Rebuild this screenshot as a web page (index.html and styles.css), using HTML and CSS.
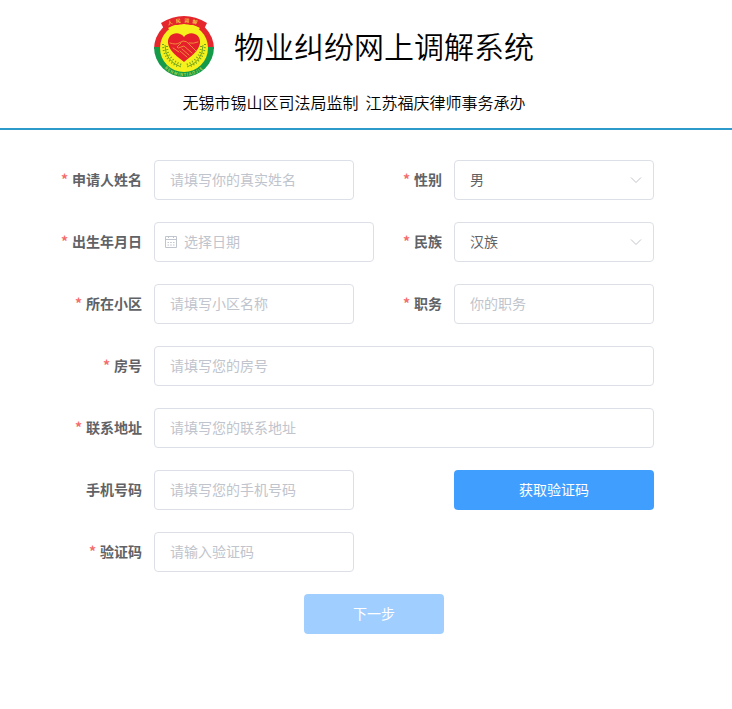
FILE: index.html
```html
<!DOCTYPE html>
<html lang="zh-CN">
<head>
    <meta charset="UTF-8">
    <meta name="viewport" content="width=device-width, initial-scale=1.0">
    <title>物业纠纷网上调解系统</title>
    <link rel="stylesheet" href="styles.css">
</head>
<body>
    <header class="header">
        <div class="brand">
            <svg class="logo" viewBox="0 0 60 62" aria-hidden="true">
                <defs>
                    <path id="arcTop" d="M9 12 Q30 1 51 12"/>
                    <path id="arcBottom" d="M3 35 A27 25 0 0 0 57 35"/>
                </defs>
                <path d="M0 33 A30 30 0 0 1 60 33 Z" fill="#e5262c"/>
                <path d="M0 31 A30 30 0 0 0 60 31 Z" fill="#159a4a"/>
                <circle cx="30" cy="32" r="24" fill="#f6f01c"/>
                <path d="M14 12 L20 9 H40 L46 12 L40 19 H20 Z" fill="#f6f01c"/>
                <path d="M7 7 Q30 -7 53 7 L50 13 Q30 3 10 13 Z" fill="#e5262c"/>
                <g fill="none" stroke="#6fa51e" stroke-width="1">
                    <path d="M11 29 Q11 45 27 51 M49 29 Q49 45 33 51"/>
                    <path stroke-width="2" stroke-dasharray="1 2" d="M9 28 Q9 44 25 51 M51 28 Q51 44 35 51"/>
                    <path stroke-width="2" stroke-dasharray="1 2" d="M13 30 Q13 43 28 49 M47 30 Q47 43 32 49"/>
                </g>
                <path d="M30 21 C25 14 13 17 14 27 C15 35 24 41 30 46 C36 41 45 35 46 27 C47 17 35 14 30 21 Z" fill="#e5202a"/>
                <g fill="none" stroke="#f08a3c" stroke-width="1" stroke-linecap="round">
                    <path d="M16 27 Q22 29 25 27 L29 25 Q33 25 35 28 L42 35"/>
                    <path d="M44 26 Q39 28 35 27 M27 27 L23 31 Q24 33 27 31 L30 30 L38 37"/>
                    <path d="M19 32 L25 36 M28 33 L35 39 M26 35 L33 41"/>
                </g>
                <text class="logo-top"><textPath href="#arcTop" startOffset="50%">人民调解</textPath></text>
                <text class="logo-bottom"><textPath href="#arcBottom" startOffset="50%">RENMINTIAOJIE</textPath></text>
            </svg>
            <h1 class="title">物业纠纷网上调解系统</h1>
        </div>
        <p class="subtitle">无锡市锡山区司法局监制&nbsp; 江苏福庆律师事务承办</p>
    </header>

    <main class="main">
        <form class="form">
            <div class="item">
                <label class="label required" for="name">申请人姓名</label>
                <input class="input" type="text" id="name" placeholder="请填写你的真实姓名">
            </div>
            <div class="item">
                <label class="label required" for="sex">性别</label>
                <div class="field">
                    <select class="input" id="sex">
                        <option>男</option>
                        <option>女</option>
                    </select>
                    <svg class="arrow" viewBox="0 0 14 14" aria-hidden="true"><path d="M2 4.500 L7 9.500 L12 4.500"/></svg>
                </div>
            </div>
            <div class="item">
                <label class="label required" for="birthday">出生年月日</label>
                <div class="field date">
                    <svg class="calendar" viewBox="0 0 14 14" aria-hidden="true">
                        <path d="M1.500 1.500 H12.500 V12.500 H1.500 Z M1.500 4.500 H12.500 M4.500 1 V3 M9.500 1 V3"/>
                        <path d="M3.500 7.500 H5 M6.200 7.500 H7.800 M9 7.500 H10.500 M3.500 10 H5 M6.200 10 H7.800 M9 10 H10.500"/>
                    </svg>
                    <input class="input" type="text" id="birthday" placeholder="选择日期">
                </div>
            </div>
            <div class="item">
                <label class="label required" for="nation">民族</label>
                <div class="field">
                    <select class="input" id="nation">
                        <option>汉族</option>
                    </select>
                    <svg class="arrow" viewBox="0 0 14 14" aria-hidden="true"><path d="M2 4.500 L7 9.500 L12 4.500"/></svg>
                </div>
            </div>
            <div class="item">
                <label class="label required" for="community">所在小区</label>
                <input class="input" type="text" id="community" placeholder="请填写小区名称">
            </div>
            <div class="item">
                <label class="label required" for="job">职务</label>
                <input class="input" type="text" id="job" placeholder="你的职务">
            </div>
            <div class="item wide">
                <label class="label required" for="room">房号</label>
                <input class="input" type="text" id="room" placeholder="请填写您的房号">
            </div>
            <div class="item wide">
                <label class="label required" for="address">联系地址</label>
                <input class="input" type="text" id="address" placeholder="请填写您的联系地址">
            </div>
            <div class="item">
                <label class="label" for="phone">手机号码</label>
                <input class="input" type="text" id="phone" placeholder="请填写您的手机号码">
            </div>
            <div class="item action">
                <button class="button" type="button">获取验证码</button>
            </div>
            <div class="item wide half">
                <label class="label required" for="code">验证码</label>
                <input class="input" type="text" id="code" placeholder="请输入验证码">
            </div>
            <div class="wide submit">
                <button class="button next" type="submit" disabled>下一步</button>
            </div>
        </form>
    </main>
</body>
</html>
```
FILE: styles.css
```css
* {
    box-sizing: border-box;
}

body {
    margin: 0;
    font-family: "Noto Sans CJK SC", sans-serif;
    font-size: 14px;
    color: #606266;
    background: #fff;
}

.header {
    padding: 16px 24px 14px 0;
    border-bottom: 2px solid #2c9acb;
    color: #000;
}

.brand {
    display: flex;
    justify-content: center;
    align-items: flex-start;
    gap: 20px;
    padding-right: 20px;
}

.logo {
    width: 60px;
    height: 62px;
    overflow: visible;
}

.logo text {
    text-anchor: middle;
    fill: #f6e84a;
}

.logo-top {
    font-size: 5px;
    letter-spacing: 3px;
}

.logo-bottom {
    font-size: 4px;
    letter-spacing: 1px;
}

.title {
    margin: 0;
    font-size: 30px;
    font-weight: 350;
    line-height: 58px;
}

.subtitle {
    margin: 12px 0 0;
    font-size: 16px;
    font-weight: 350;
    line-height: 24px;
    text-align: center;
}

.main {
    padding: 30px 24px 30px 0;
}

.form {
    display: grid;
    grid-template-columns: repeat(2, minmax(0, 1fr));
    row-gap: 22px;
    max-width: 600px;
    margin: 0 auto;
}

.item {
    display: flex;
}

.wide {
    grid-column: 1 / 3;
}

.half {
    width: 50%;
}

.label {
    flex: 0 0 100px;
    padding-right: 12px;
    font-weight: bold;
    line-height: 38px;
    text-align: right;
}

.required::before {
    content: "*";
    margin-right: 4px;
    color: #f56c6c;
}

.field {
    position: relative;
    flex: 1;
}

/* the date box is a little wider than its column */
.date {
    flex: 0 0 220px;
}

.input {
    width: 100%;
    min-width: 0;
    height: 40px;
    padding: 0 15px 2px;
    border: 1px solid #dcdfe6;
    border-radius: 4px;
    background: #fff;
    color: #606266;
    font-family: inherit;
    font-size: 14px;
    font-weight: 400;
    appearance: none;
    outline: none;
}

.input::placeholder {
    color: #c0c4cc;
}

.input:focus {
    border-color: #409eff;
}

.date .input {
    padding-left: 29px;
}

.arrow,
.calendar {
    position: absolute;
    top: 13px;
    width: 14px;
    height: 14px;
    fill: none;
    stroke: #c0c4cc;
    pointer-events: none;
}

.arrow {
    right: 11px;
}

.calendar {
    left: 10px;
}

.action {
    padding-left: 100px;
}

.button {
    width: 100%;
    height: 40px;
    padding: 0 0 2px;
    border: 0;
    border-radius: 4px;
    background: #409eff;
    color: #fff;
    font-family: inherit;
    font-size: 14px;
    cursor: pointer;
}

.submit {
    padding-left: 250px;
}

.next {
    width: 140px;
}

.next:disabled {
    background: #a0cfff;
    cursor: not-allowed;
}
```
